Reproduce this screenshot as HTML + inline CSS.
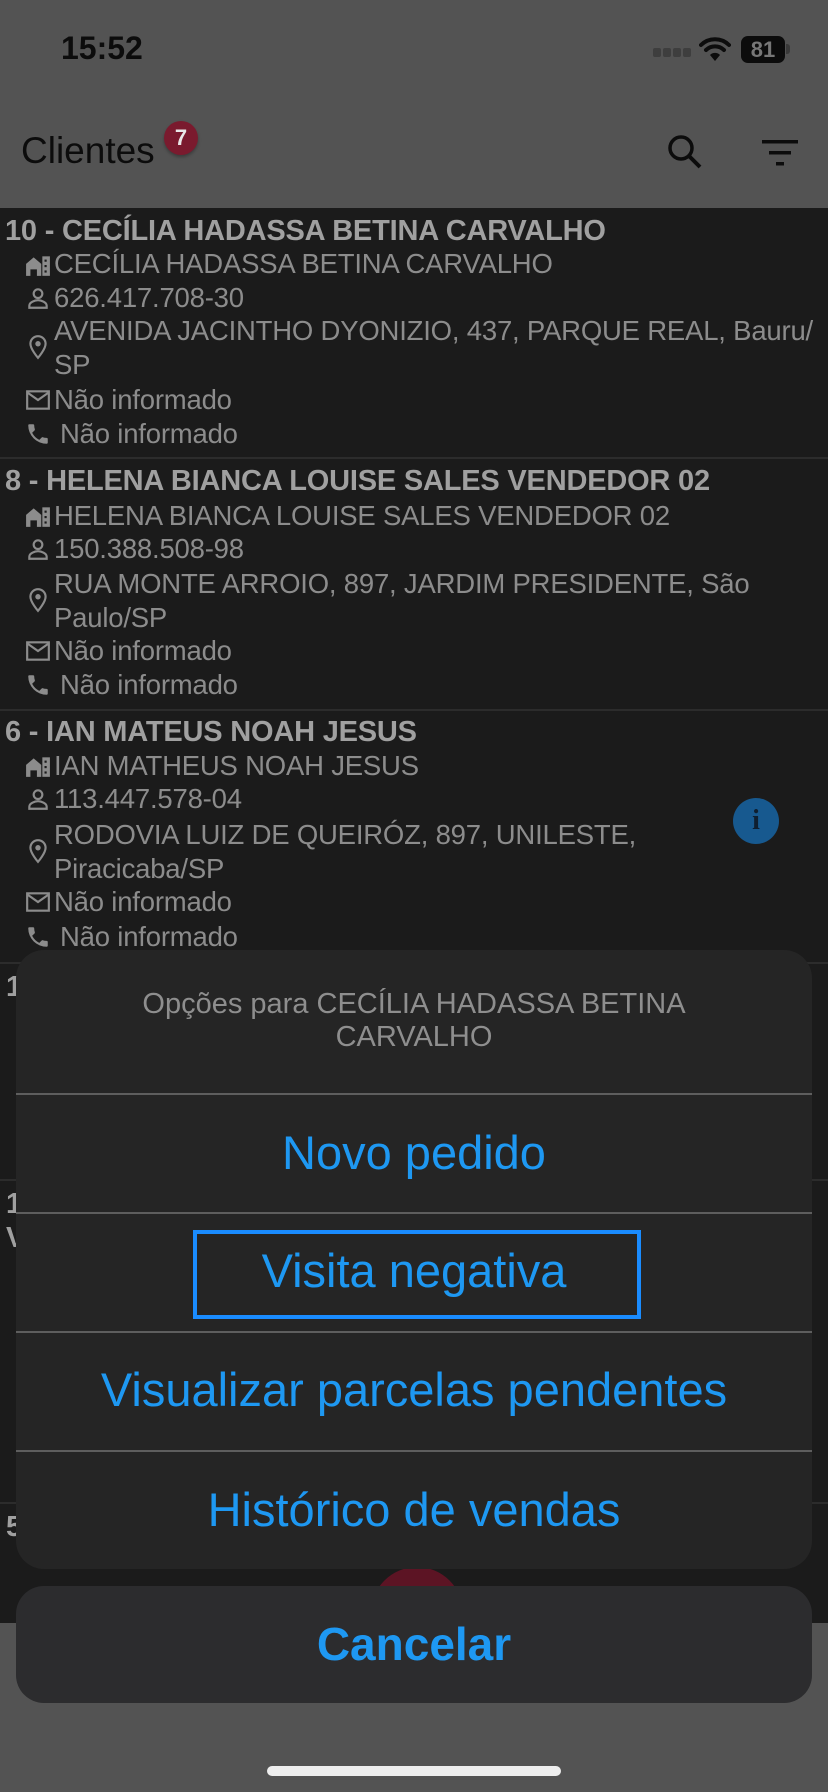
<!DOCTYPE html>
<html><head><meta charset="utf-8"><style>
*{margin:0;padding:0;box-sizing:border-box}
body{width:828px;height:1792px;background:#535353;position:relative;overflow:hidden;font-family:"Liberation Sans",sans-serif}
.a{position:absolute}
.list{left:0;top:208px;width:828px;height:1415px;background:#1b1b1b}
.t{position:absolute;left:5px;font-size:29px;font-weight:bold;color:#a0a0a0;line-height:34px;white-space:nowrap;letter-spacing:-0.2px}
.r{position:absolute;left:54px;font-size:27.5px;color:#8c8c8c;line-height:34px;white-space:nowrap;letter-spacing:-0.2px}
.ic{position:absolute;left:25px;width:26px;height:26px}
.sep{position:absolute;left:0;width:828px;height:2px;background:#2c2c2c}
.sheet{left:16px;top:950px;width:796px;height:619px;background:#252525;border-radius:28px;overflow:hidden}
.opt{position:absolute;left:0;width:796px;text-align:center;font-size:47px;color:#1e98f2;line-height:54px}
.hs{position:absolute;left:0;width:796px;height:2px;background:#5e5e5e}
</style></head><body>
<div class="a" style="left:61px;top:30px;font-size:32px;font-weight:bold;color:#0c0c0c">15:52</div>
<div class="a" style="left:653px;top:48px;width:38px;height:9px;display:flex;gap:2px"><i style="flex:1;background:#3e3e3e;border-radius:2px"></i><i style="flex:1;background:#3e3e3e;border-radius:2px"></i><i style="flex:1;background:#3e3e3e;border-radius:2px"></i><i style="flex:1;background:#3e3e3e;border-radius:2px"></i></div>
<svg class="a" style="left:699px;top:36px" width="32" height="26" viewBox="0 0 32 26"><path d="M2 9a20 20 0 0 1 28 0" stroke="#0c0c0c" stroke-width="4" fill="none" stroke-linecap="round"/><path d="M7 14a13 13 0 0 1 18 0" stroke="#0c0c0c" stroke-width="4" fill="none" stroke-linecap="round"/><path d="M16 25l-5-6a7 7 0 0 1 10 0z" fill="#0c0c0c"/></svg>
<div class="a" style="left:741px;top:36px;width:44px;height:27px;background:#0c0c0c;border-radius:7px;color:#777;font-weight:bold;font-size:22px;line-height:27px;text-align:center">81</div>
<div class="a" style="left:786px;top:44px;width:4px;height:10px;background:#3a3a3a;border-radius:0 3px 3px 0"></div>
<div class="a" style="left:21px;top:130px;font-size:37px;color:#0c0c0c">Clientes</div>
<div class="a" style="left:164px;top:121px;width:34px;height:34px;border-radius:50%;background:#7a1a2e;color:#e8e8e8;font-size:22px;font-weight:bold;text-align:center;line-height:34px;box-shadow:0 2px 3px rgba(0,0,0,.3)">7</div>
<svg class="a" style="left:666px;top:133px" width="38" height="38" viewBox="0 0 38 38"><circle cx="15" cy="15" r="11" stroke="#0c0c0c" stroke-width="3.5" fill="none"/><path d="M23 23l11 11" stroke="#0c0c0c" stroke-width="4"/></svg>
<svg class="a" style="left:762px;top:138px" width="36" height="30" viewBox="0 0 36 30"><rect x="0" y="2" width="36" height="3.5" fill="#0c0c0c"/><rect x="7" y="13" width="22" height="3.5" fill="#0c0c0c"/><rect x="14" y="24" width="8" height="3.5" fill="#0c0c0c"/></svg>

<div class="a list"></div>
<svg width="0" height="0" style="position:absolute"><defs>
<symbol id="b" viewBox="0 0 24 24"><path d="M1 22V11l7-6 7 6v11h-4v-6H5v6z" fill="#8c8c8c"/><rect x="16" y="4" width="7" height="18" fill="#8c8c8c"/><rect x="18" y="7" width="2" height="2" fill="#1b1b1b"/><rect x="18" y="12" width="2" height="2" fill="#1b1b1b"/><rect x="18" y="17" width="2" height="2" fill="#1b1b1b"/></symbol>
<symbol id="p" viewBox="0 0 24 24"><circle cx="12" cy="8" r="4" stroke="#8c8c8c" stroke-width="2" fill="none"/><path d="M4 21v-2c0-3 5-5 8-5s8 2 8 5v2z" stroke="#8c8c8c" stroke-width="2" fill="none"/></symbol>
<symbol id="m" viewBox="0 0 24 24"><path d="M12 2a7 7 0 0 0-7 7c0 5 7 13 7 13s7-8 7-13a7 7 0 0 0-7-7z" stroke="#8c8c8c" stroke-width="2" fill="none"/><circle cx="12" cy="9" r="2.5" fill="#8c8c8c"/></symbol>
<symbol id="e" viewBox="0 0 24 24"><rect x="2" y="4" width="20" height="16" stroke="#8c8c8c" stroke-width="2" fill="none"/><path d="M2 5l10 7 10-7" stroke="#8c8c8c" stroke-width="2" fill="none"/></symbol>
<symbol id="f" viewBox="0 0 24 24"><path d="M6.6 10.8a15 15 0 0 0 6.6 6.6l2.2-2.2c.3-.3.7-.4 1-.2 1.1.4 2.3.6 3.6.6.6 0 1 .4 1 1V20c0 .6-.4 1-1 1A17 17 0 0 1 3 4c0-.6.4-1 1-1h3.5c.6 0 1 .4 1 1 0 1.3.2 2.5.6 3.6.1.3 0 .7-.2 1z" fill="#8c8c8c"/></symbol>
</defs></svg>

<div class="t" style="top:214px">10 - CECÍLIA HADASSA BETINA CARVALHO</div>
<svg class="ic" style="top:252px"><use href="#b"/></svg><div class="r" style="top:247px">CECÍLIA HADASSA BETINA CARVALHO</div>
<svg class="ic" style="top:285px"><use href="#p"/></svg><div class="r" style="top:281px">626.417.708-30</div>
<svg class="ic" style="top:334px"><use href="#m"/></svg><div class="r" style="top:314px">AVENIDA JACINTHO DYONIZIO, 437, PARQUE REAL, Bauru/<br>SP</div>
<svg class="ic" style="top:387px"><use href="#e"/></svg><div class="r" style="top:383px">Não informado</div>
<svg class="ic" style="top:421px"><use href="#f"/></svg><div class="r" style="top:417px;left:60px">Não informado</div>
<div class="sep" style="top:457px"></div>
<div class="t" style="top:464px">8 - HELENA BIANCA LOUISE SALES VENDEDOR 02</div>
<svg class="ic" style="top:503px"><use href="#b"/></svg><div class="r" style="top:499px">HELENA BIANCA LOUISE SALES VENDEDOR 02</div>
<svg class="ic" style="top:536px"><use href="#p"/></svg><div class="r" style="top:532px">150.388.508-98</div>
<svg class="ic" style="top:587px"><use href="#m"/></svg><div class="r" style="top:567px">RUA MONTE ARROIO, 897, JARDIM PRESIDENTE, São<br>Paulo/SP</div>
<svg class="ic" style="top:638px"><use href="#e"/></svg><div class="r" style="top:634px">Não informado</div>
<svg class="ic" style="top:672px"><use href="#f"/></svg><div class="r" style="top:668px;left:60px">Não informado</div>
<div class="sep" style="top:709px"></div>
<div class="t" style="top:715px">6 - IAN MATEUS NOAH JESUS</div>
<svg class="ic" style="top:753px"><use href="#b"/></svg><div class="r" style="top:749px">IAN MATHEUS NOAH JESUS</div>
<svg class="ic" style="top:786px"><use href="#p"/></svg><div class="r" style="top:782px">113.447.578-04</div>
<svg class="ic" style="top:838px"><use href="#m"/></svg><div class="r" style="top:818px">RODOVIA LUIZ DE QUEIRÓZ, 897, UNILESTE,<br>Piracicaba/SP</div>
<svg class="ic" style="top:889px"><use href="#e"/></svg><div class="r" style="top:885px">Não informado</div>
<svg class="ic" style="top:924px"><use href="#f"/></svg><div class="r" style="top:920px;left:60px">Não informado</div>
<div class="a" style="left:733px;top:798px;width:46px;height:46px;border-radius:50%;background:#17598f;color:#0f1f30;font-size:28px;font-weight:bold;text-align:center;line-height:46px;font-family:'Liberation Serif',serif">i</div>
<div class="sep" style="top:962px"></div>
<div class="t" style="top:970px;left:6px">1</div>
<div class="sep" style="top:1179px"></div>
<div class="t" style="top:1187px;left:6px">1</div>
<div class="t" style="top:1221px;left:6px">V</div>
<div class="sep" style="top:1502px"></div>
<div class="t" style="top:1510px;left:6px">5</div>
<div class="a" style="left:371px;top:1567px;width:92px;height:92px;border-radius:50%;background:#5c1424"></div>

<div class="a sheet">
<div class="a" style="left:0;top:38px;width:796px;text-align:center;font-size:29px;color:#8e8e8e;line-height:33px">Opções para CECÍLIA HADASSA BETINA<br>CARVALHO</div>
<div class="hs" style="top:143px"></div>
<div class="opt" style="top:176px">Novo pedido</div>
<div class="hs" style="top:262px"></div>
<div class="a" style="left:177px;top:280px;width:448px;height:89px;border:4px solid #1a8cff"></div>
<div class="opt" style="top:294px">Visita negativa</div>
<div class="hs" style="top:381px"></div>
<div class="opt" style="top:413px">Visualizar parcelas pendentes</div>
<div class="hs" style="top:500px"></div>
<div class="opt" style="top:533px">Histórico de vendas</div>
</div>
<div class="a" style="left:16px;top:1586px;width:796px;height:117px;background:#2c2c2e;border-radius:28px;text-align:center;font-size:46px;font-weight:bold;color:#1e98f2;line-height:117px">Cancelar</div>
<div class="a" style="left:267px;top:1766px;width:294px;height:10px;border-radius:5px;background:#eeeeee"></div>
</body></html>
